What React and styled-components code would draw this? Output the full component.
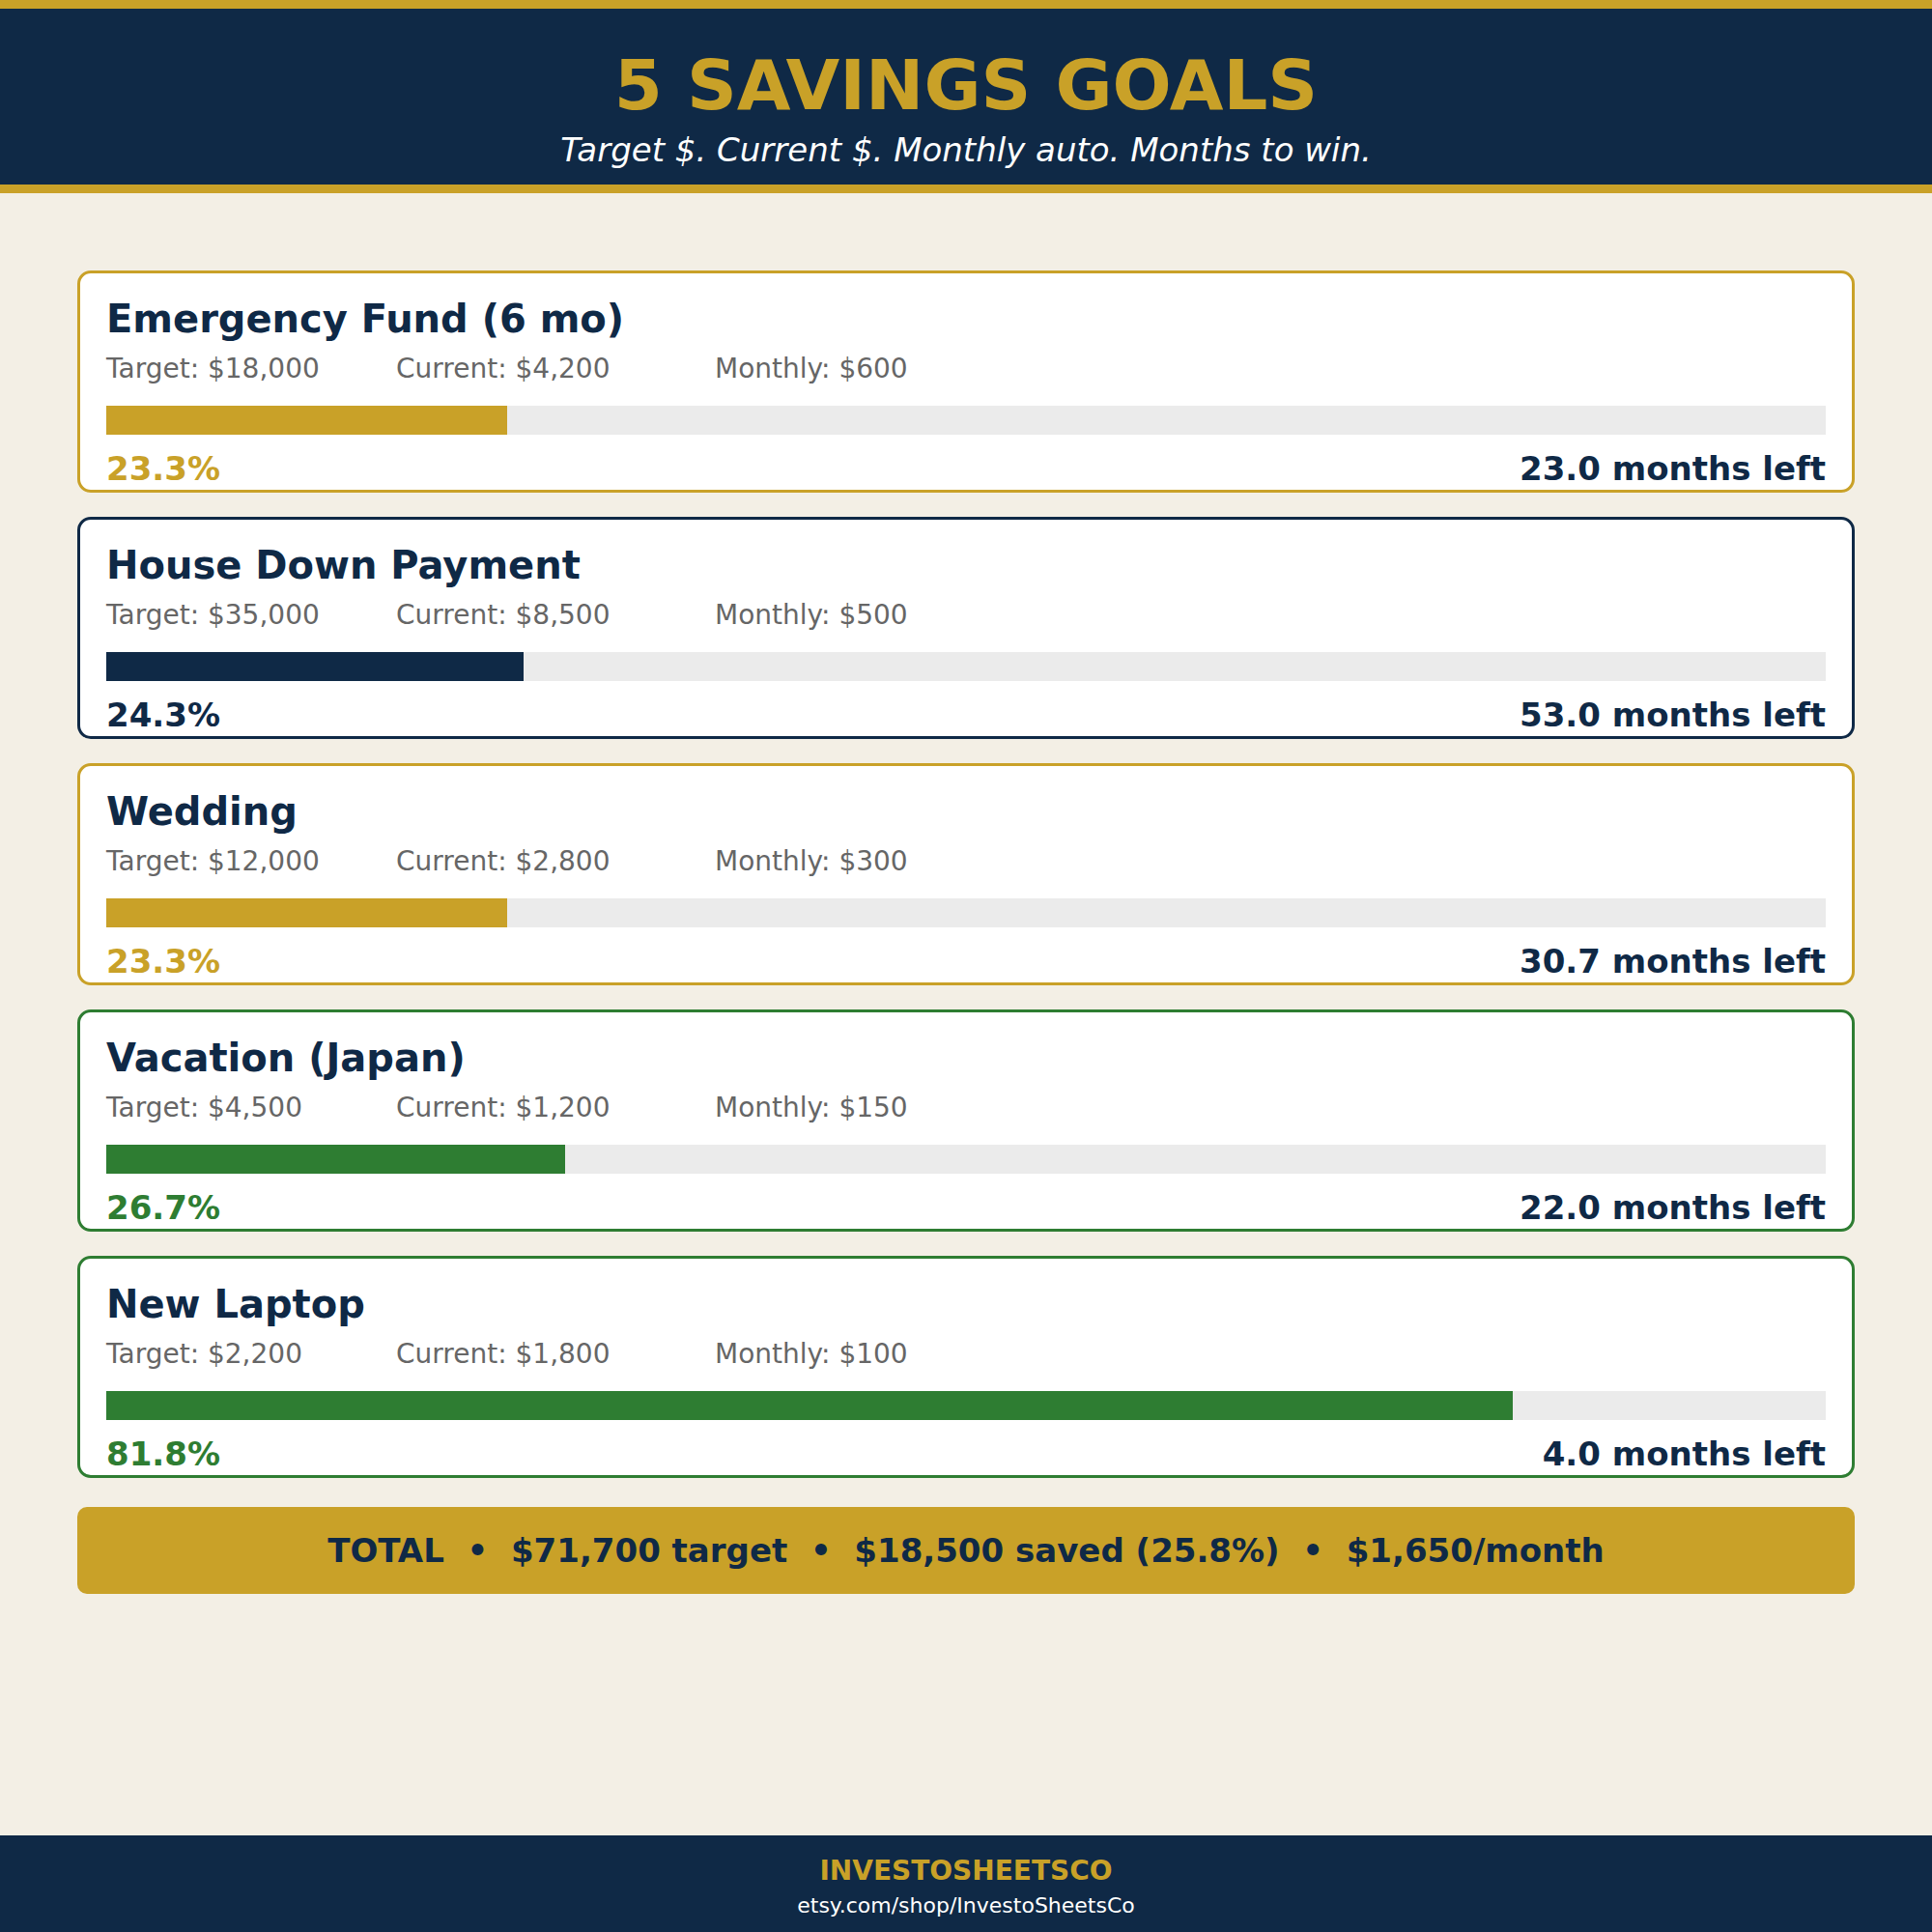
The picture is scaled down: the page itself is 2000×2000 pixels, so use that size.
import React from 'react';
import styled, { createGlobalStyle } from 'styled-components';

const GOLD = '#C9A128';
const NAVY = '#0F2946';
const GREEN = '#2E7D32';

const goals = [
    { name: 'Emergency Fund (6 mo)', target: 18000, current: 4200, monthly: 600, color: GOLD },
    { name: 'House Down Payment', target: 35000, current: 8500, monthly: 500, color: NAVY },
    { name: 'Wedding', target: 12000, current: 2800, monthly: 300, color: GOLD },
    { name: 'Vacation (Japan)', target: 4500, current: 1200, monthly: 150, color: GREEN },
    { name: 'New Laptop', target: 2200, current: 1800, monthly: 100, color: GREEN },
];

const money = (n) => '$' + n.toLocaleString('en-US');

const GlobalStyle = createGlobalStyle`
    body {
        margin: 0;
        background: #F3EFE5;
        font-family: "DejaVu Sans", "Liberation Sans", sans-serif;
    }
`

const App = () => {
    return (
        <Page>
            <GlobalStyle />
            <Header>
                <Title>5 SAVINGS GOALS</Title>
                <Subtitle>Target $. Current $. Monthly auto. Months to win.</Subtitle>
            </Header>

            <Main>
                {goals.map((g) => {
                    const pct = (g.current / g.target) * 100;
                    const months = (g.target - g.current) / g.monthly;
                    return (
                        <Card key={g.name} $color={g.color}>
                            <GoalName>{g.name}</GoalName>
                            <Stats>
                                <span>Target: {money(g.target)}</span>
                                <span>Current: {money(g.current)}</span>
                                <span>Monthly: {money(g.monthly)}</span>
                            </Stats>
                            <Track>
                                <Fill $color={g.color} style={{ width: pct + '%' }} />
                            </Track>
                            <BottomRow>
                                <Percent $color={g.color}>{pct.toFixed(1)}%</Percent>
                                <MonthsLeft>{months.toFixed(1)} months left</MonthsLeft>
                            </BottomRow>
                        </Card>
                    );
                })}

                <Total>{'TOTAL  •  $71,700 target  •  $18,500 saved (25.8%)  •  $1,650/month'}</Total>
            </Main>

            <Footer>
                <Brand>INVESTOSHEETSCO</Brand>
                <Link>etsy.com/shop/InvestoSheetsCo</Link>
            </Footer>
        </Page>
    );
}

const Page = styled.div`
    height: 2000px;
    display: flex;
    flex-direction: column;
    background: #F3EFE5;
`

const Header = styled.header`
    height: 200px;
    box-sizing: border-box;
    background: ${NAVY};
    border-top: 9px solid ${GOLD};
    border-bottom: 9px solid ${GOLD};
    padding-top: 43px;
    text-align: center;
`

const Title = styled.h1`
    margin: 0;
    font-size: 72px;
    line-height: 72px;
    font-weight: bold;
    color: ${GOLD};
`

const Subtitle = styled.p`
    margin: 14px 0 0;
    font-size: 34px;
    line-height: 34px;
    font-style: italic;
    color: #ffffff;
`

const Main = styled.main`
    flex: 1;
    display: flex;
    flex-direction: column;
    gap: 25px;
    padding: 80px 80px 0;
`

const Card = styled.section`
    height: 230px;
    box-sizing: border-box;
    background: #ffffff;
    border: 3px solid ${({ $color }) => $color};
    border-radius: 14px;
    padding: 27px 27px 5px;
    display: flex;
    flex-direction: column;
`

const GoalName = styled.h2`
    margin: 0;
    font-size: 40px;
    line-height: 40px;
    font-weight: bold;
    color: ${NAVY};
`

const Stats = styled.div`
    margin-top: 18px;
    display: grid;
    grid-template-columns: 300px 330px auto;
    font-size: 28px;
    line-height: 28px;
    color: #666666;
`

const Track = styled.div`
    margin-top: 24px;
    height: 30px;
    background: #EBEBEB;
`

const Fill = styled.div`
    height: 100%;
    background: ${({ $color }) => $color};
`

const BottomRow = styled.div`
    margin-top: 18px;
    display: flex;
    justify-content: space-between;
    font-size: 34px;
    line-height: 34px;
    font-weight: bold;
`

const Percent = styled.span`
    color: ${({ $color }) => $color};
`

const MonthsLeft = styled.span`
    color: ${NAVY};
`

const Total = styled.div`
    margin-top: 5px;
    height: 90px;
    border-radius: 10px;
    background: ${GOLD};
    color: ${NAVY};
    font-size: 34px;
    line-height: 90px;
    font-weight: bold;
    text-align: center;
    white-space: pre;
`

const Footer = styled.footer`
    height: 100px;
    box-sizing: border-box;
    background: ${NAVY};
    padding-top: 23px;
    text-align: center;
`

const Brand = styled.div`
    font-size: 28px;
    line-height: 28px;
    font-weight: bold;
    color: ${GOLD};
`

const Link = styled.div`
    margin-top: 11px;
    font-size: 22px;
    line-height: 22px;
    color: #ffffff;
`

export default App;
